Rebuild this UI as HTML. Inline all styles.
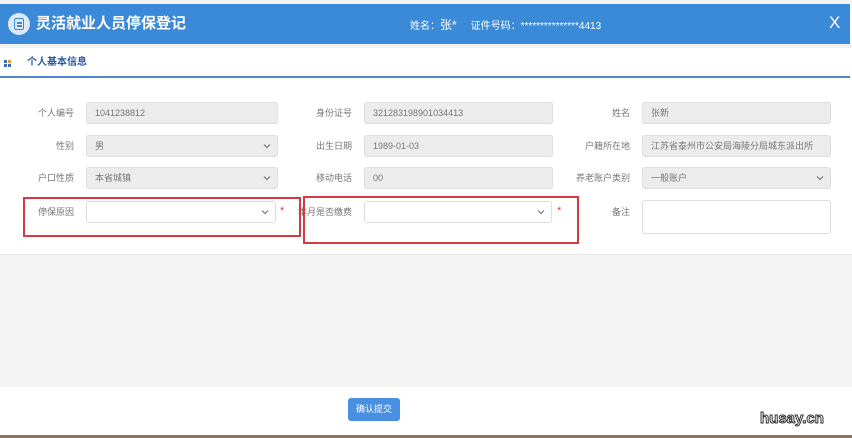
<!DOCTYPE html><html><head><meta charset="utf-8"><style>
*{box-sizing:border-box;margin:0;padding:0}
body{width:852px;height:438px;background:#fff;font-family:"Liberation Sans","Noto Sans CJK SC",sans-serif;position:relative;overflow:hidden;color:#666}
.a{position:absolute}
.hdr{left:0;top:4px;width:850px;height:40px;background:#3a8ad7;color:#fff}
.lbl{font-size:9px;color:#777;text-align:right;width:80px;line-height:22px;height:22px}
.in{height:22px;background:#ececec;border:1px solid #ddd;border-radius:3px;font-size:9px;color:#777;padding:0 8px;line-height:20px}
.w{background:#fff}
.chev{position:absolute;right:6px;top:7px;width:8px;height:6px}
.red{border:2px solid #d43a42}
.star{color:#e04040;font-size:11px}
</style></head><body>
<div class="a" style="left:0;top:0;width:852px;height:4px;background:#f4f4f4"></div>
<div class="a hdr">
 <div class="a" style="left:8px;top:9px;width:22px;height:22px;border-radius:50%;background:#dfe9f5"></div>
 <div class="a" style="left:14px;top:14px;width:10px;height:12px;border:1.5px solid #3a8ad7;border-radius:2px"></div>
 <div class="a" style="left:16.5px;top:18px;width:5px;height:1.5px;background:#3a8ad7;box-shadow:0 3px #3a8ad7"></div>
 <div class="a" style="left:36px;top:10px;font-size:15px;font-weight:bold;line-height:20px">灵活就业人员停保登记</div>
 <div class="a" style="left:410px;top:14px;font-size:10px;line-height:14px">姓名：<span style="font-size:12px">张*</span>&nbsp;&nbsp;&nbsp;&nbsp;&nbsp;证件号码：***************4413</div>
 <div class="a" style="left:829px;top:9px;font-size:17px;line-height:20px;font-weight:300">X</div>
</div>
<div class="a" style="left:0;top:44px;width:852px;height:4px;background:#f1f1f1"></div>
<div class="a" style="left:0;top:48px;width:850px;height:30px;border-bottom:2px solid #4a86c8;background:#fff"></div>
<div class="a" style="left:4px;top:60px;width:3px;height:3px;background:#3a6fb8;box-shadow:4px 0 #e79b2e,0 4px #3a6fb8,4px 4px #3a6fb8"></div>
<div class="a" style="left:27px;top:56px;font-size:10px;font-weight:bold;color:#2b5aa0;line-height:14px">个人基本信息</div>

<div class="a lbl" style="left:-6px;top:102px">个人编号</div>
<div class="a in" style="left:86px;top:102px;width:192px">1041238812</div>
<div class="a lbl" style="left:272px;top:102px">身份证号</div>
<div class="a in" style="left:364px;top:102px;width:189px">321283198901034413</div>
<div class="a lbl" style="left:550px;top:102px">姓名</div>
<div class="a in" style="left:642px;top:102px;width:189px">张新</div>

<div class="a lbl" style="left:-6px;top:135px">性别</div>
<div class="a in" style="left:86px;top:135px;width:192px">男<svg class="chev" viewBox="0 0 8 6"><path d="M1 1.5L4 4.5L7 1.5" fill="none" stroke="#777" stroke-width="1.2"/></svg></div>
<div class="a lbl" style="left:272px;top:135px">出生日期</div>
<div class="a in" style="left:364px;top:135px;width:189px">1989-01-03</div>
<div class="a lbl" style="left:550px;top:135px">户籍所在地</div>
<div class="a in" style="left:642px;top:135px;width:189px">江苏省泰州市公安局海陵分局城东派出所</div>

<div class="a lbl" style="left:-6px;top:167px">户口性质</div>
<div class="a in" style="left:86px;top:167px;width:192px">本省城镇<svg class="chev" viewBox="0 0 8 6"><path d="M1 1.5L4 4.5L7 1.5" fill="none" stroke="#777" stroke-width="1.2"/></svg></div>
<div class="a lbl" style="left:272px;top:167px">移动电话</div>
<div class="a in" style="left:364px;top:167px;width:189px">00</div>
<div class="a lbl" style="left:550px;top:167px">养老账户类别</div>
<div class="a in" style="left:642px;top:167px;width:189px">一般账户<svg class="chev" viewBox="0 0 8 6"><path d="M1 1.5L4 4.5L7 1.5" fill="none" stroke="#777" stroke-width="1.2"/></svg></div>

<div class="a lbl" style="left:-6px;top:201px">停保原因</div>
<div class="a in w" style="left:86px;top:201px;width:190px"><svg class="chev" viewBox="0 0 8 6"><path d="M1 1.5L4 4.5L7 1.5" fill="none" stroke="#777" stroke-width="1.2"/></svg></div>
<div class="a star" style="left:280px;top:205px">*</div>
<div class="a lbl" style="left:272px;top:201px">本月是否缴费</div>
<div class="a in w" style="left:364px;top:201px;width:188px"><svg class="chev" viewBox="0 0 8 6"><path d="M1 1.5L4 4.5L7 1.5" fill="none" stroke="#777" stroke-width="1.2"/></svg></div>
<div class="a star" style="left:557px;top:205px">*</div>
<div class="a lbl" style="left:550px;top:201px">备注</div>
<div class="a in w" style="left:642px;top:200px;width:189px;height:34px"></div>

<div class="a red" style="left:23px;top:197px;width:278px;height:40px"></div>
<div class="a red" style="left:303px;top:196px;width:276px;height:48px"></div>

<div class="a" style="left:0;top:254px;width:852px;height:133px;background:#f4f4f4;border-top:1px solid #e6e6e6"></div>
<div class="a" style="left:348px;top:398px;width:52px;height:23px;background:#4a90e2;border-radius:3px;color:#fff;font-size:9px;text-align:center;line-height:23px">确认提交</div>
<div class="a" style="left:760px;top:410px;font-size:15px;font-weight:bold;color:#fff;-webkit-text-stroke:1px #333;line-height:18px">husay.cn</div>
<div class="a" style="left:0;top:435px;width:852px;height:3px;background:#8a7360"></div>
</body></html>
